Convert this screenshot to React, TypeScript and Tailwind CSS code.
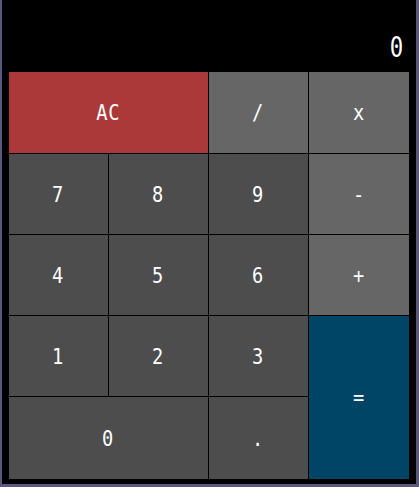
const keys = [
  { label: 'AC', cls: 'col-span-2 bg-[#ac3939]' },
  { label: '/', cls: 'bg-[#666666]' },
  { label: 'x', cls: 'bg-[#666666]' },
  { label: '7', cls: 'bg-[#4d4d4d]' },
  { label: '8', cls: 'bg-[#4d4d4d]' },
  { label: '9', cls: 'bg-[#4d4d4d]' },
  { label: '-', cls: 'bg-[#666666]' },
  { label: '4', cls: 'bg-[#4d4d4d]' },
  { label: '5', cls: 'bg-[#4d4d4d]' },
  { label: '6', cls: 'bg-[#4d4d4d]' },
  { label: '+', cls: 'bg-[#666666]' },
  { label: '1', cls: 'bg-[#4d4d4d]' },
  { label: '2', cls: 'bg-[#4d4d4d]' },
  { label: '3', cls: 'bg-[#4d4d4d]' },
  { label: '=', cls: 'row-span-2 bg-[#004466]' },
  { label: '0', cls: 'col-span-2 bg-[#4d4d4d]' },
  { label: '.', cls: 'bg-[#4d4d4d]' },
];

const App = () => {
  return (
    <div className="h-[487px] w-[419px] bg-[#5a5880] pl-[2px]">
      <div className="w-[414px] bg-black px-[7px] pb-[5px]">
        <div className="flex h-[72px] items-center justify-end pr-[4px] pt-[24px] font-['DejaVu_Sans_Mono',monospace] text-[28px] leading-none text-white">
          <span className="inline-block scale-x-[0.8]">0</span>
        </div>
        <div className="grid grid-cols-[99px_99px_99px_100px] grid-rows-[81px_80px_80px_80px_82px] gap-px bg-black">
          {keys.map((k) => (
            <button
              key={k.label}
              className={`${k.cls} flex items-center justify-center font-['DejaVu_Sans_Mono',monospace] text-[22px] text-white`}
            >
              <span className="inline-block scale-x-[0.85] tracking-[1px]">{k.label}</span>
            </button>
          ))}
        </div>
      </div>
    </div>
  );
};

export default App;
